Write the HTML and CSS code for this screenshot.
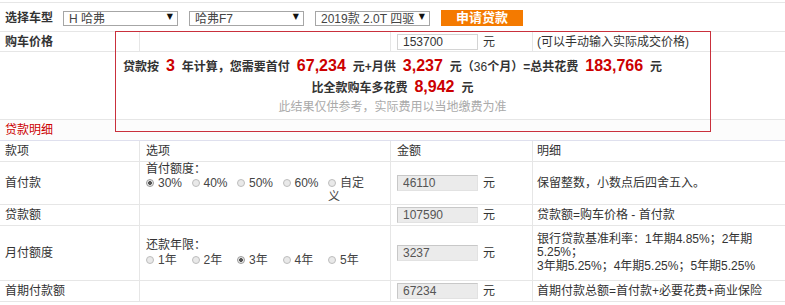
FILE: index.html
```html
<!DOCTYPE html>
<html lang="zh-CN">
<head>
    <meta charset="UTF-8">
    <title>贷款计算器</title>
    <link rel="stylesheet" href="styles.css">
</head>
<body>
    <div class="calc">
        <div class="row row-select">
            <span class="label">选择车型</span>
            <div class="fake-select"><span>H 哈弗</span><i>▼</i></div>
            <div class="fake-select"><span>哈弗F7</span><i>▼</i></div>
            <div class="fake-select"><span>2019款 2.0T 四驱</span><i>▼</i></div>
            <a class="apply-btn">申请贷款</a>
        </div>

        <div class="row row-grid row-price">
            <div class="cell label">购车价格</div>
            <div class="cell vl"></div>
            <div class="cell vl"><input type="text" class="amount" value="153700"><span class="unit">元</span></div>
            <div class="cell vl col4">(可以手动输入实际成交价格)</div>
        </div>

        <div class="row row-summary">
            <p class="sum-line">贷款按<em>3</em>年计算，您需要首付<em>67,234</em>元+月供<em>3,237</em>元（<span class="thin">36</span>个月）=总共花费<em>183,766</em>元</p>
            <p class="sum-line">比全款购车多花费<em>8,942</em>元</p>
            <p class="sum-tip">此结果仅供参考，实际费用以当地缴费为准</p>
        </div>

        <div class="row row-title">贷款明细</div>

        <div class="row row-grid row-head">
            <div class="cell">款项</div>
            <div class="cell vl">选项</div>
            <div class="cell vl">金额</div>
            <div class="cell vl col4">明细</div>
        </div>

        <div class="row row-grid row-down">
            <div class="cell">首付款</div>
            <div class="cell vl options">
                <div>首付额度：</div>
                <div class="radios">
                    <label class="opt"><input type="radio" name="ratio" checked>30%</label>
                    <label class="opt"><input type="radio" name="ratio">40%</label>
                    <label class="opt"><input type="radio" name="ratio">50%</label>
                    <label class="opt"><input type="radio" name="ratio">60%</label>
                    <label class="opt"><input type="radio" name="ratio">自定<br>义</label>
                </div>
            </div>
            <div class="cell vl"><input type="text" class="amount readonly" value="46110" readonly><span class="unit">元</span></div>
            <div class="cell vl col4">保留整数，小数点后四舍五入。</div>
        </div>

        <div class="row row-grid row-loan">
            <div class="cell">贷款额</div>
            <div class="cell vl"></div>
            <div class="cell vl"><input type="text" class="amount readonly" value="107590" readonly><span class="unit">元</span></div>
            <div class="cell vl col4">贷款额=购车价格 - 首付款</div>
        </div>

        <div class="row row-grid row-month">
            <div class="cell">月付额度</div>
            <div class="cell vl options">
                <div>还款年限：</div>
                <div class="radios">
                    <label class="opt"><input type="radio" name="years">1年</label>
                    <label class="opt"><input type="radio" name="years">2年</label>
                    <label class="opt"><input type="radio" name="years" checked>3年</label>
                    <label class="opt"><input type="radio" name="years">4年</label>
                    <label class="opt"><input type="radio" name="years">5年</label>
                </div>
            </div>
            <div class="cell vl"><input type="text" class="amount readonly" value="3237" readonly><span class="unit">元</span></div>
            <div class="cell vl col4 rates">银行贷款基准利率：1年期4.85%；2年期<br>5.25%；<br>3年期5.25%；4年期5.25%；5年期5.25%</div>
        </div>

        <div class="row row-grid row-first">
            <div class="cell">首期付款额</div>
            <div class="cell vl"></div>
            <div class="cell vl"><input type="text" class="amount readonly" value="67234" readonly><span class="unit">元</span></div>
            <div class="cell vl col4">首期付款总额=首付款+必要花费+商业保险</div>
        </div>

        <div class="result-box"></div>
    </div>
</body>
</html>
```

FILE: styles.css
```css
body {
    margin: 0;
    font: 12px/14px "Liberation Sans", "Noto Sans CJK SC", sans-serif;
    color: #333;
    background: #fff;
}
.calc {
    position: relative;
    width: 785px;
    margin-top: 2px;
}
.row {
    box-sizing: border-box;
    border-bottom: 1px solid #e6e6e6;
}
.row-grid {
    display: grid;
    grid-template-columns: 139px 251px 142px 1fr;
}
.cell {
    display: flex;
    align-items: center;
    box-sizing: border-box;
    padding: 0 5px;
}
.cell.vl {
    border-left: 1px solid #e6e6e6;
    padding-left: 6px;
}
.cell.col4 {
    padding-left: 4px;
}
.label {
    font-weight: bold;
}

/* top row: car selection */
.row-select {
    height: 30px;
    border-top: 1px solid #e6e6e6;
    display: flex;
    align-items: center;
    padding: 1px 0 0 5px;
}
.row-select .label {
    margin-right: 10px;
}
.fake-select {
    box-sizing: border-box;
    width: 115px;
    height: 15px;
    margin: 1px 11px 0 0;
    border: 1px solid #a6a6a6;
    display: flex;
    justify-content: space-between;
    color: #444;
}
.fake-select span {
    padding-left: 5px;
    line-height: 14px;
}
.fake-select i {
    font-style: normal;
    font-family: "DejaVu Sans", sans-serif;
    font-size: 8px;
    line-height: 10px;
    color: #111;
    padding-right: 4px;
}
.apply-btn {
    width: 82px;
    height: 16px;
    background: #f47a00;
    color: #fff;
    font-weight: bold;
    font-size: 13px;
    line-height: 16px;
    text-align: center;
}

.row-price {
    height: 20px;
}
.amount {
    box-sizing: border-box;
    width: 81px;
    height: 16px;
    margin: 0;
    padding: 0 0 0 5px;
    border: 1px solid #d4d4d4;
    font: 12px "Liberation Sans", sans-serif;
    color: #333;
    background: #fff;
}
.amount.readonly {
    background: #ebebeb;
    color: #555;
    border-color: #c8c8c8 #e2e2e2 #e2e2e2 #c8c8c8;
}
.unit {
    margin-left: 5px;
}

/* summary */
.row-summary {
    height: 68px;
    padding-top: 4px;
    text-align: center;
}
.row-summary p {
    margin: 0;
}
.sum-line {
    line-height: 20px;
    font-weight: bold;
    color: #333;
}
.sum-line em {
    font-style: normal;
    color: #cc0000;
    font-size: 16px;
    margin: 0 7px;
}
.sum-line .thin {
    font-weight: normal;
}
.sum-tip {
    line-height: 18px;
    color: #aaa;
}

.row-title {
    height: 21px;
    line-height: 20px;
    padding-left: 5px;
    color: #cc0000;
    background: #fcfcfc;
    border-bottom-color: #dfe0ee;
}
.row-head {
    height: 21px;
}
.row-down {
    height: 43px;
}
.row-loan {
    height: 21px;
}
.row-month {
    height: 55px;
}
.row-first {
    height: 21px;
}

/* radio options */
.options {
    flex-direction: column;
    align-items: flex-start;
    justify-content: center;
    line-height: 14px;
}
.row-month .options {
    line-height: 15px;
}
.radios {
    display: flex;
    white-space: nowrap;
}
.opt {
    display: block;
    width: 45.5px;
    color: #444;
}
.opt input {
    appearance: none;
    box-sizing: border-box;
    width: 8px;
    height: 8px;
    margin: 0 4px 0 0;
    border: 1px solid #bdbdbd;
    border-radius: 50%;
    background: #e9e9e9;
    vertical-align: 0;
}
.opt input:checked {
    background: radial-gradient(circle, #555 0 1.6px, #e9e9e9 2.2px);
    border-color: #999;
}
.rates {
    line-height: 13.5px;
    white-space: nowrap;
}

.result-box {
    position: absolute;
    left: 115px;
    top: 29px;
    width: 596px;
    height: 101px;
    box-sizing: border-box;
    border: 1px solid #c9303c;
    pointer-events: none;
}
```
